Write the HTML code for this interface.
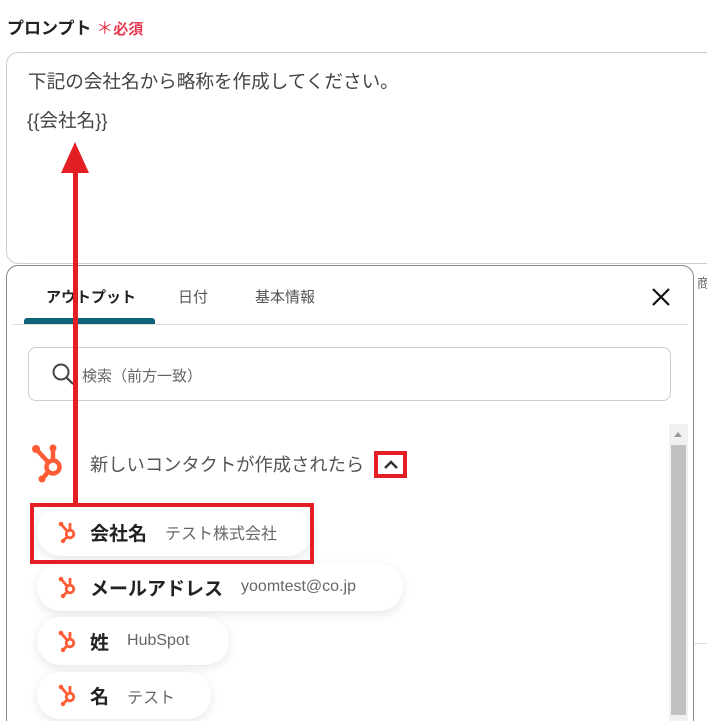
<!DOCTYPE html>
<html><head><meta charset="utf-8"><style>
*{margin:0;padding:0;box-sizing:border-box}
html,body{width:707px;height:721px;overflow:hidden}
body{background:#fff;font-family:"Liberation Sans","Noto Sans CJK JP",sans-serif;position:relative}
.a{position:absolute}
.pill{position:absolute;left:37px;height:48px;background:#fff;border-radius:24px;box-shadow:0 3px 10px rgba(0,0,0,.1);display:flex;align-items:center;padding-left:21px;white-space:nowrap}
.pill b{font-size:19px;color:#222;margin-left:14px;margin-right:18px}
.pill span{font-size:16px;color:#666}
</style></head><body>
<div class="a" style="left:7px;top:14px;font-size:17px;font-weight:bold;color:#222;white-space:nowrap">プロンプト<span style="color:#e8384f;font-weight:normal"> ＊</span><span style="color:#e8384f;font-size:15px">必須</span></div>
<div class="a" style="left:6px;top:52px;width:701px;height:212px;border:1px solid #ccc;border-right:none;border-radius:12px 0 0 12px"></div>
<div class="a" style="left:28px;top:67px;font-size:18.6px;color:#444;white-space:nowrap">下記の会社名から略称を作成してください。</div>
<div class="a" style="left:27px;top:106px;font-size:18.6px;color:#444">{{会社名}}</div>
<div class="a" style="left:697px;top:273px;width:10px;height:18px;overflow:hidden;font-size:13px;color:#666;white-space:nowrap">商品</div>
<div class="a" style="left:693px;top:643px;width:14px;height:1px;background:#ddd"></div>
<div class="a" style="left:6px;top:265px;width:688px;height:456px;border:1px solid #888;border-bottom:none;border-radius:12px 12px 0 0;background:#fff"></div>
<div class="a" style="left:46px;top:286px;font-size:15px;font-weight:bold;color:#222">アウトプット</div>
<div class="a" style="left:178px;top:286px;font-size:15px;color:#555">日付</div>
<div class="a" style="left:255px;top:286px;font-size:15px;color:#555">基本情報</div>
<div class="a" style="left:24px;top:318px;width:131px;height:6px;background:#0e6378;border-radius:3px 3px 0 0"></div>
<div class="a" style="left:12px;top:324px;width:676px;height:1px;background:#ddd"></div>
<svg class="a" style="left:651px;top:287px" width="20" height="20"><path d="M2 2L18 18M18 2L2 18" stroke="#111" stroke-width="2.2"/></svg>
<div class="a" style="left:28px;top:347px;width:643px;height:54px;border:1px solid #ccc;border-radius:8px"></div>
<svg class="a" style="left:51px;top:362px" width="24" height="24"><circle cx="10" cy="10" r="7.5" fill="none" stroke="#444" stroke-width="2"/><path d="M15.5 15.5L22 22" stroke="#444" stroke-width="2.2"/></svg>
<div class="a" style="left:82px;top:365px;font-size:15px;color:#666">検索（前方一致）</div>
<div class="a" style="left:669px;top:424px;width:19px;height:297px;background:#f1f1f1"></div>
<div class="a" style="left:671px;top:445px;width:15px;height:270px;background:#c1c1c1"></div>
<svg class="a" style="left:673px;top:431px" width="10" height="8"><path d="M1 6L5 1L9 6Z" fill="#999"/></svg>
<svg class="a" style="left:30px;top:443px" width="38" height="40" viewBox="0 0 38 40"><g stroke="#ff5c35" stroke-width="4.5" fill="none"><circle cx="23" cy="24" r="6.5"/><path d="M7 7L18 19M23 5V18M18 29L13 35"/></g><circle cx="6" cy="6" r="4" fill="#ff5c35"/><circle cx="23" cy="5" r="3.5" fill="#ff5c35"/><circle cx="12" cy="36" r="3.5" fill="#ff5c35"/></svg>
<div class="a" style="left:90px;top:451px;font-size:18.3px;color:#555;white-space:nowrap">新しいコンタクトが作成されたら</div>
<div class="a" style="left:374px;top:451px;width:33px;height:27px;border:4px solid #e31e24"></div>
<svg class="a" style="left:383px;top:459px" width="16" height="12"><path d="M2 9L8 3L14 9" stroke="#333" stroke-width="2.5" fill="none"/></svg>
<svg width="0" height="0" style="position:absolute"><defs><g id="hs"><g stroke="#ff5c35" stroke-width="2.8" fill="none"><circle cx="12" cy="13" r="3.8"/><path d="M3 3L9 10M12 2V9M9 16L5 20"/></g><circle cx="3" cy="3" r="2.3" fill="#ff5c35"/><circle cx="5" cy="20" r="2.2" fill="#ff5c35"/></g></defs></svg>
<div class="pill" style="top:508px;width:275px"><svg width="18" height="23"><use href="#hs"/></svg><b>会社名</b><span>テスト株式会社</span></div>
<div class="pill" style="top:563px;width:366px"><svg width="18" height="23"><use href="#hs"/></svg><b>メールアドレス</b><span>yoomtest@co.jp</span></div>
<div class="pill" style="top:617px;width:192px"><svg width="18" height="23"><use href="#hs"/></svg><b>姓</b><span>HubSpot</span></div>
<div class="pill" style="top:672px;width:174px;height:47px"><svg width="18" height="23"><use href="#hs"/></svg><b>名</b><span>テスト</span></div>
<div class="a" style="left:30px;top:503px;width:284px;height:61px;border:4px solid #e31e24"></div>
<div class="a" style="left:73px;top:168px;width:5px;height:337px;background:#e31e24"></div>
<svg class="a" style="left:58px;top:140px" width="34" height="34"><path d="M17 2L31 33H3Z" fill="#e31e24"/></svg>
</body></html>
